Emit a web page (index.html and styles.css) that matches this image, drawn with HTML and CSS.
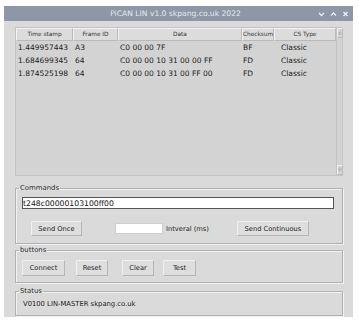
FILE: index.html
```html
<!doctype html>
<html>
<head>
    <link rel="stylesheet" href="styles.css">
</head>
<body>
    <div class="window">
        <div class="titlebar">
            <span class="title">PiCAN LIN v1.0 skpang.co.uk 2022</span>
            <div class="controls">
                <svg width="7" height="6" viewBox="0 0 7 6"><path d="M1 2 L3.5 4.5 L6 2" fill="none" stroke="#eef1f5" stroke-width="1.3"/></svg>
                <svg width="7" height="6" viewBox="0 0 7 6"><path d="M1 4.5 L3.5 2 L6 4.5" fill="none" stroke="#eef1f5" stroke-width="1.3"/></svg>
                <svg width="7" height="6" viewBox="0 0 7 6"><path d="M1.5 1 L5.5 5 M5.5 1 L1.5 5" fill="none" stroke="#eef1f5" stroke-width="1.3"/></svg>
            </div>
        </div>
        <div class="content">
            <div class="tree">
                <div class="grid">
                    <div class="head">Time stamp</div>
                    <div class="head">Frame ID</div>
                    <div class="head">Data</div>
                    <div class="head">Checksum</div>
                    <div class="head">CS Type</div>

                    <div class="cell c1">1.449957443</div>
                    <div class="cell c2">A3</div>
                    <div class="cell c3">C0 00 00 7F</div>
                    <div class="cell c4">BF</div>
                    <div class="cell c5">Classic</div>

                    <div class="cell c1">1.684699345</div>
                    <div class="cell c2">64</div>
                    <div class="cell c3">C0 00 00 10 31 00 00 FF</div>
                    <div class="cell c4">FD</div>
                    <div class="cell c5">Classic</div>

                    <div class="cell c1">1.874525198</div>
                    <div class="cell c2">64</div>
                    <div class="cell c3">C0 00 00 10 31 00 FF 00</div>
                    <div class="cell c4">FD</div>
                    <div class="cell c5">Classic</div>
                </div>
                <div class="scrollbar">
                    <div class="arrow">
                        <svg width="5" height="6" viewBox="0 0 5 6"><path d="M0.5 4.5 L2.5 1.5 L4.5 4.5 Z" fill="none" stroke="#a8a8a8" stroke-width="0.8"/></svg>
                    </div>
                    <div class="trough"></div>
                    <div class="arrow">
                        <svg width="5" height="6" viewBox="0 0 5 6"><path d="M0.5 1.5 L2.5 4.5 L4.5 1.5 Z" fill="none" stroke="#a8a8a8" stroke-width="0.8"/></svg>
                    </div>
                </div>
            </div>

            <fieldset class="group commands">
                <legend>Commands</legend>
                <input class="cmd" type="text" value="t248c00000103100ff00">
                <div class="row">
                    <button class="btn send-once">Send Once</button>
                    <input class="interval" type="text">
                    <span class="label">Intveral (ms)</span>
                    <button class="btn send-cont">Send Continuous</button>
                </div>
            </fieldset>

            <fieldset class="group buttons">
                <legend>buttons</legend>
                <div class="row">
                    <button class="btn connect">Connect</button>
                    <button class="btn reset">Reset</button>
                    <button class="btn clear">Clear</button>
                    <button class="btn test">Test</button>
                </div>
            </fieldset>

            <fieldset class="group status">
                <legend>Status</legend>
                <div class="status-text">V0100 LIN-MASTER skpang.co.uk</div>
            </fieldset>
        </div>
    </div>
</body>
</html>
```
FILE: styles.css
```css
body {
    margin: 0;
    background: #ffffff;
    font-family: "DejaVu Sans", sans-serif;
    color: #222;
}
.window {
    margin: 6px 0 0 4px;
    width: 349px;
    height: 311px;
    background: #dadada;
}
.titlebar {
    height: 15px;
    background: #8d97a7;
    display: flex;
    align-items: center;
    position: relative;
}
.title {
    flex: 1;
    text-align: center;
    color: #e4e8ee;
    font-size: 7.6px;
    padding-right: 6px;
}
.controls {
    position: absolute;
    right: 4px;
    top: 5px;
    display: flex;
    gap: 5px;
}
.controls svg {
    display: block;
}
.content {
    padding: 6px 10px 0 11px;
}
.tree {
    display: flex;
    height: 149px;
    width: 328px;
    background: #d3d3d3;
    border: 1px solid #c4c4c4;
    box-sizing: border-box;
}
.grid {
    flex: 1;
    display: grid;
    grid-template-columns: 57px 45px 124px 32px 62px;
    grid-auto-rows: 13px;
    align-content: start;
    font-size: 7.5px;
}
.grid .head {
    height: 13px;
    box-sizing: border-box;
    border: 1px solid #b9b9b9;
    border-top-color: #f2f2f2;
    border-left-color: #f2f2f2;
    background: #dcdcdc;
    font-size: 5.8px;
    text-align: center;
    line-height: 11px;
    color: #333;
}
.cell {
    line-height: 13px;
    white-space: nowrap;
}
.c1 { padding-left: 2px; }
.c2 { padding-left: 2px; }
.c3 { padding-left: 2px; }
.c4 { padding-left: 1px; }
.c5 { padding-left: 7px; }
.scrollbar {
    width: 7px;
    display: flex;
    flex-direction: column;
    border-left: 1px solid #c4c4c4;
    box-sizing: border-box;
}
.arrow {
    height: 8px;
    border: 1px solid #bdbdbd;
    border-top-color: #f0f0f0;
    border-left-color: #f0f0f0;
    display: flex;
    align-items: center;
    justify-content: center;
}
.arrow svg {
    display: block;
}
.trough {
    flex: 1;
    border-right: 1px solid #c6c6c6;
}
.group {
    margin: 0;
    padding: 0;
    width: 328px;
    box-sizing: border-box;
    border: 1px solid #b1b1b1;
    box-shadow: 1px 1px 0 #f1f1f1, inset 1px 1px 0 #f1f1f1;
    min-inline-size: 0;
}
.group legend {
    font-size: 6.9px;
    line-height: 10px;
    padding: 0 1px;
    margin-left: 3px;
    color: #2a2a2a;
}
.commands {
    margin-top: 7px;
    height: 61px;
}
.cmd {
    display: block;
    margin: 4px 0 0 6px;
    width: 312px;
    height: 12px;
    box-sizing: border-box;
    border: 1px solid #555;
    background: #fff;
    font-family: "DejaVu Sans", sans-serif;
    font-size: 7.7px;
    padding: 0;
    color: #111;
    outline: none;
}
.row {
    display: flex;
    align-items: center;
}
.commands .row {
    margin-top: 12px;
}
.btn {
    height: 15px;
    padding: 0;
    box-sizing: border-box;
    border: 1px solid #b5b5b5;
    border-top-color: #efefef;
    border-left-color: #efefef;
    background: #dedede;
    font-family: "DejaVu Sans", sans-serif;
    font-size: 6.7px;
    color: #222;
}
.send-once {
    margin-left: 15px;
    width: 51px;
}
.interval {
    margin-left: 33px;
    width: 48px;
    height: 11px;
    box-sizing: border-box;
    border: 1px solid #cfcfcf;
    background: #fff;
    padding: 0;
}
.label {
    font-size: 6.7px;
    margin-left: 3px;
}
.send-cont {
    margin-left: 28px;
    width: 72px;
}
.buttons {
    margin-top: 1px;
    height: 38px;
}
.buttons .row {
    margin-top: 5px;
}
.buttons .btn {
    height: 16px;
}
.connect {
    margin-left: 6px;
    width: 43px;
}
.reset {
    margin-left: 11px;
    width: 32px;
}
.clear {
    margin-left: 14px;
    width: 32px;
}
.test {
    margin-left: 9px;
    width: 33px;
}
.status {
    margin-top: 3px;
    height: 30px;
}
.status-text {
    font-size: 6.8px;
    margin: 4px 0 0 7px;
}
```
